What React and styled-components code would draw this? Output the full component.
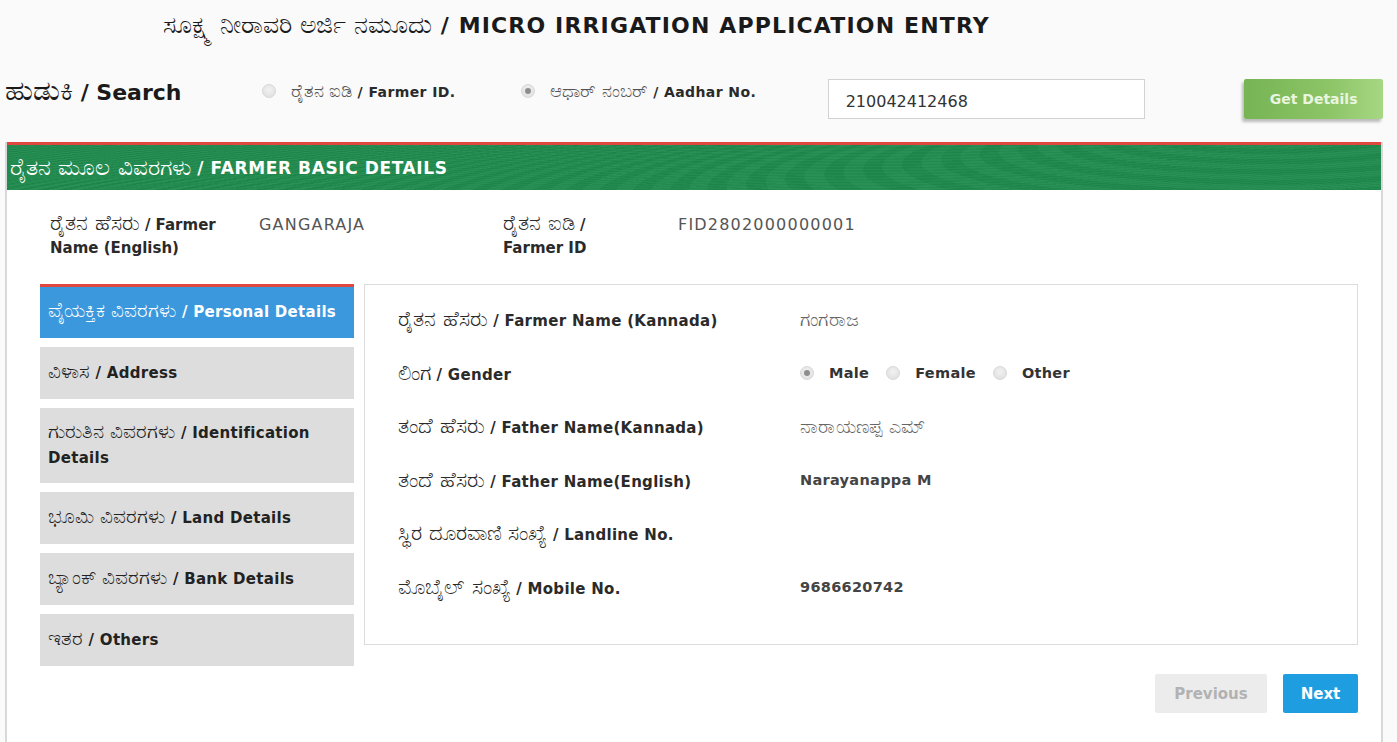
import React from "react";
import styled, { createGlobalStyle } from "styled-components";

const Global = createGlobalStyle`
  html, body { margin: 0; padding: 0; background: #fafafa; }
  body { font-family: "DejaVu Sans", "Noto Sans", sans-serif; color: #222; }
  * { box-sizing: border-box; }
`;

const Page = styled.div`
  width: 1397px;
  height: 742px;
  overflow: hidden;
  padding: 0 14px 0 5px;
`;

const Title = styled.h1`
  margin: 0;
  padding: 0 0 0 158px;
  height: 56px;
  line-height: 52px;
  font-size: 22px;
  font-weight: 700;
  color: #1a1a1a;
  letter-spacing: 1.15px;
  white-space: nowrap;
`;

const Kn = styled.span`
  font-weight: 400;
  font-size: ${p => p.$size || "1em"};
  color: ${p => p.$color || "inherit"};
  letter-spacing: 0;
  line-height: 1;
`;

const SearchRow = styled.div`
  display: flex;
  align-items: center;
  height: 86px;
`;

const SearchLabel = styled.div`
  width: 257px;
  font-size: 22px;
  font-weight: 700;
  color: #1a1a1a;
  padding-bottom: 16px;
  white-space: nowrap;
`;

const RadioOption = styled.label`
  display: flex;
  align-items: center;
  gap: 15px;
  width: ${p => p.$w || "auto"};
  font-size: 14px;
  font-weight: 700;
  letter-spacing: 0.4px;
  color: #2a2a2a;
  padding-bottom: 16px;
  white-space: nowrap;
`;

const Radio = styled.span`
  width: 14px;
  height: 14px;
  border-radius: 50%;
  background: radial-gradient(circle at 50% 40%, #f2f2f2, #dcdcdc);
  border: 1px solid #d8d8d8;
  display: inline-flex;
  align-items: center;
  justify-content: center;
  flex-shrink: 0;
  &::after {
    content: "";
    width: 6px;
    height: 6px;
    border-radius: 50%;
    background: ${p => (p.$checked ? "#8d8d8d" : "transparent")};
  }
`;

const Input = styled.div`
  width: 318px;
  height: 40px;
  border: 1px solid #d2d2d2;
  background: #fff;
  display: flex;
  align-items: center;
  padding: 5px 17px 0;
  font-size: 16px;
  color: #333;
`;

const GetButton = styled.button`
  margin-left: 99px;
  width: 139px;
  height: 40px;
  border: none;
  border-radius: 2px;
  background: linear-gradient(90deg, #76b454 0%, #8cc466 60%, #a6d783 100%);
  box-shadow: -2px 3px 3px rgba(0, 0, 0, 0.25);
  color: #eaf5e0;
  font-family: inherit;
  font-weight: 700;
  font-size: 14px;
  padding: 0;
`;

const Panel = styled.section`
  background: #fff;
  border-left: 2px solid #d8d8d8;
  border-right: 2px solid #d8d8d8;
  height: 620px;
`;

const PanelHeader = styled.div`
  height: 48px;
  border-top: 3px solid #e0473f;
  background:
    repeating-radial-gradient(ellipse at 62% 160%, rgba(255,255,255,0.025) 0 9px, rgba(0,0,0,0.025) 9px 18px),
    repeating-radial-gradient(ellipse at 92% -60%, rgba(255,255,255,0.025) 0 8px, rgba(0,0,0,0.02) 8px 16px),
    #1f8b4d;
  color: #fff;
  font-size: 17px;
  font-weight: 700;
  letter-spacing: 0.6px;
  display: flex;
  align-items: center;
  padding: 0 0 0 3px;
  white-space: nowrap;
`;

const InfoRow = styled.div`
  display: flex;
  align-items: flex-start;
  padding: 23px 0 0 43px;
  height: 94px;
`;

const InfoLabel = styled.div`
  width: ${p => p.$w};
  font-size: 15px;
  font-weight: 700;
  line-height: 23px;
  color: #2a2a2a;
  white-space: nowrap;
`;

const InfoValue = styled.div`
  width: ${p => p.$w};
  font-size: 16px;
  font-weight: 400;
  color: #555;
  line-height: 23px;
  letter-spacing: 1.2px;
`;

const Body = styled.div`
  display: flex;
  gap: 10px;
  padding: 0 0 0 33px;
`;

const Tabs = styled.nav`
  width: 314px;
  display: flex;
  flex-direction: column;
  gap: 9px;
`;

const Tab = styled.div`
  height: ${p => (p.$tall ? "75px" : p.$active ? "54px" : "52px")};
  background: ${p => (p.$active ? "#3b98dc" : "#dddddd")};
  border-top: ${p => (p.$active ? "3px solid #e0473f" : "none")};
  color: ${p => (p.$active ? "#fff" : "#222")};
  font-size: 15px;
  font-weight: 700;
  letter-spacing: 0.3px;
  line-height: 25px;
  display: flex;
  align-items: center;
  padding: 0 8px;
`;

const Content = styled.div`
  width: 994px;
  height: 361px;
  border: 1px solid #dcdcdc;
  padding: 8px 0 0 33px;
  display: flex;
  flex-direction: column;
`;

const FieldRow = styled.div`
  display: flex;
  align-items: center;
  height: 53.5px;
  flex-shrink: 0;
`;

const FieldLabel = styled.div`
  width: 402px;
  font-size: 15px;
  font-weight: 700;
  letter-spacing: 0.3px;
  color: #2a2a2a;
  white-space: nowrap;
`;

const FieldValue = styled.div`
  display: flex;
  align-items: center;
  font-size: ${p => (p.$kn ? "19px" : "14.5px")};
  font-weight: ${p => (p.$kn ? 400 : 700)};
  color: ${p => (p.$kn ? "#666" : "#444")};
  letter-spacing: 0.3px;
`;

const GenderOption = styled.label`
  display: flex;
  align-items: center;
  gap: 15px;
  margin-right: 17px;
  font-size: 14.5px;
  font-weight: 700;
  color: #333;
`;

const Footer = styled.div`
  display: flex;
  justify-content: flex-end;
  gap: 16px;
  padding: 29px 0 0 0;
`;

const NavButton = styled.button`
  height: 39px;
  width: ${p => (p.$primary ? "75px" : "112px")};
  padding: 0;
  border: none;
  border-radius: 2px;
  background: ${p => (p.$primary ? "#1e9ee0" : "#ececec")};
  color: ${p => (p.$primary ? "#fff" : "#b2b2b2")};
  font-family: inherit;
  font-size: 15px;
  font-weight: 700;
`;

const fields = [
  { kn: "ರೈತನ ಹೆಸರು", en: "Farmer Name (Kannada)", value: "ಗಂಗರಾಜ", knValue: true },
  { kn: "ಲಿಂಗ", en: "Gender", gender: true },
  { kn: "ತಂದೆ ಹೆಸರು", en: "Father Name(Kannada)", value: "ನಾರಾಯಣಪ್ಪ ಎಮ್", knValue: true },
  { kn: "ತಂದೆ ಹೆಸರು", en: "Father Name(English)", value: "Narayanappa M" },
  { kn: "ಸ್ಥಿರ ದೂರವಾಣಿ ಸಂಖ್ಯೆ", en: "Landline No.", value: "" },
  { kn: "ಮೊಬೈಲ್ ಸಂಖ್ಯೆ", en: "Mobile No.", value: "9686620742" },
];

const tabs = [
  { kn: "ವೈಯಕ್ತಿಕ ವಿವರಗಳು", en: "Personal Details", active: true },
  { kn: "ವಿಳಾಸ", en: "Address" },
  { kn: "ಗುರುತಿನ ವಿವರಗಳು", en: "Identification", en2: "Details", tall: true },
  { kn: "ಭೂಮಿ ವಿವರಗಳು", en: "Land Details" },
  { kn: "ಬ್ಯಾಂಕ್ ವಿವರಗಳು", en: "Bank Details" },
  { kn: "ಇತರ", en: "Others" },
];

export default function App() {
  return (
    <Page>
      <Global />
      <Title>
        <Kn $size="25px">ಸೂಕ್ಷ್ಮ ನೀರಾವರಿ ಅರ್ಜಿ ನಮೂದು</Kn> / MICRO IRRIGATION APPLICATION ENTRY
      </Title>
      <SearchRow>
        <SearchLabel>
          <Kn $size="28px">ಹುಡುಕಿ</Kn> / Search
        </SearchLabel>
        <RadioOption $w="260px">
          <Radio />
          <span>
            <Kn $size="18px" $color="#555">ರೈತನ ಐಡಿ</Kn> / Farmer ID.
          </span>
        </RadioOption>
        <RadioOption $w="307px">
          <Radio $checked />
          <span>
            <Kn $size="18px" $color="#555">ಆಧಾರ್ ನಂಬರ್</Kn> / Aadhar No.
          </span>
        </RadioOption>
        <Input>210042412468</Input>
        <GetButton>Get Details</GetButton>
      </SearchRow>
      <Panel>
        <PanelHeader>
          <Kn $size="23px">ರೈತನ ಮೂಲ ವಿವರಗಳು</Kn>&nbsp;/ FARMER BASIC DETAILS
        </PanelHeader>
        <InfoRow>
          <InfoLabel $w="209px">
            <Kn $size="21px">ರೈತನ ಹೆಸರು</Kn> / Farmer
            <br />
            Name (English)
          </InfoLabel>
          <InfoValue $w="244px">GANGARAJA</InfoValue>
          <InfoLabel $w="175px">
            <Kn $size="21px">ರೈತನ ಐಡಿ</Kn> /
            <br />
            Farmer ID
          </InfoLabel>
          <InfoValue $w="260px">FID2802000000001</InfoValue>
        </InfoRow>
        <Body>
          <Tabs>
            {tabs.map(t => (
              <Tab key={t.en} $active={t.active} $tall={t.tall}>
                <span>
                  <Kn $size="20px">{t.kn}</Kn> / {t.en}
                  {t.en2 && (
                    <>
                      <br />
                      {t.en2}
                    </>
                  )}
                </span>
              </Tab>
            ))}
          </Tabs>
          <div>
            <Content>
              {fields.map(f => (
                <FieldRow key={f.en}>
                  <FieldLabel>
                    <Kn $size="21px">{f.kn}</Kn> / {f.en}
                  </FieldLabel>
                  {f.gender ? (
                    <FieldValue>
                      <GenderOption>
                        <Radio $checked />
                        Male
                      </GenderOption>
                      <GenderOption>
                        <Radio />
                        Female
                      </GenderOption>
                      <GenderOption>
                        <Radio />
                        Other
                      </GenderOption>
                    </FieldValue>
                  ) : (
                    <FieldValue $kn={f.knValue}>{f.value}</FieldValue>
                  )}
                </FieldRow>
              ))}
            </Content>
            <Footer>
              <NavButton>Previous</NavButton>
              <NavButton $primary>Next</NavButton>
            </Footer>
          </div>
        </Body>
      </Panel>
    </Page>
  );
}
